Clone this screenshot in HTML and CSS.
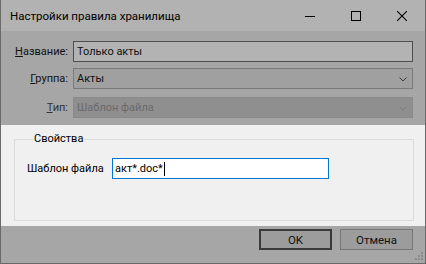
FILE: index.html
```html
<!DOCTYPE html>
<html lang="ru">
<head>
    <meta charset="UTF-8">
    <title>Настройки правила хранилища</title>
    <link rel="stylesheet" href="styles.css">
</head>
<body>

<div class="window">
    <div class="titlebar">
        <span class="title">Настройки правила хранилища</span>
        <div class="caption-btns">
            <span class="cbtn"><svg width="10" height="10" viewBox="0 0 10 10"><path d="M0 5.5H10" stroke="#000" stroke-width="1"/></svg></span>
            <span class="cbtn"><svg width="10" height="10" viewBox="0 0 10 10"><rect x="0.5" y="0.5" width="9" height="9" fill="none" stroke="#000" stroke-width="1"/></svg></span>
            <span class="cbtn"><svg width="10" height="10" viewBox="0 0 10 10"><path d="M0 0L10 10M10 0L0 10" stroke="#000" stroke-width="1.1"/></svg></span>
        </div>
    </div>

    <div class="form">
        <div class="row r1">
            <label class="lbl"><u>Н</u>азвание:</label>
            <div class="textbox">Только акты</div>
        </div>
        <div class="row r2">
            <label class="lbl"><u>Г</u>руппа:</label>
            <div class="combo">Акты
                <svg class="chev" width="8" height="5" viewBox="0 0 8 5"><path d="M0.5 0.5L4 4L7.5 0.5" fill="none" stroke="#3c3c3c"/></svg>
            </div>
        </div>
        <div class="row r3">
            <label class="lbl lbl-dis"><u>Т</u>ип:</label>
            <div class="combo disabled">Шаблон файла
                <svg class="chev" width="8" height="5" viewBox="0 0 8 5"><path d="M0.5 0.5L4 4L7.5 0.5" fill="none" stroke="#7a7a7a"/></svg>
            </div>
        </div>
    </div>

    <div class="panel">
        <fieldset class="group">
            <legend>Свойства</legend>
            <div class="prop-row">
                <span class="prop-lbl">Шаблон файла</span>
                <div class="edit">акт*.doc*<span class="caret"></span></div>
            </div>
        </fieldset>
    </div>

    <div class="footer">
        <button class="btn btn-default">OK</button>
        <button class="btn">Отмена</button>
        <svg class="grip" width="8" height="8" viewBox="0 0 8 8">
            <rect x="6" y="0" width="2" height="2" fill="#8a8a8a"/>
            <rect x="3" y="3" width="2" height="2" fill="#8a8a8a"/>
            <rect x="6" y="3" width="2" height="2" fill="#8a8a8a"/>
            <rect x="0" y="6" width="2" height="2" fill="#8a8a8a"/>
            <rect x="3" y="6" width="2" height="2" fill="#8a8a8a"/>
            <rect x="6" y="6" width="2" height="2" fill="#8a8a8a"/>
        </svg>
    </div>
</div>

</body>
</html>
```

FILE: styles.css
```css
body { margin: 0; font-family: Roboto, "Liberation Sans", sans-serif; font-size: 11px; color: #111; }

.window { width: 426px; height: 264px; box-sizing: border-box; border: 1px solid #6a6a6a; border-top: none; background: #a6a6a6; display: flex; flex-direction: column; position: relative; }

/* Заголовок */
.titlebar { height: 31px; background: #b2b2b2; display: flex; align-items: center; }
.title { padding-left: 9px; color: #000; font-size: 11.5px; }
.caption-btns { margin-left: auto; display: flex; height: 100%; }
.cbtn { width: 46px; display: flex; align-items: center; justify-content: center; }

/* Поля */
.form { padding: 10px 12px 7px 0; }
.row { display: flex; align-items: center; height: 21px; }
.r2 { margin-top: 6px; }
.r3 { margin-top: 8px; }
.lbl { width: 67px; text-align: right; margin-right: 5px; }
.lbl-dis { color: #333; }
.textbox, .combo { flex: 1; height: 21px; box-sizing: border-box; padding-left: 3px; display: flex; align-items: center; }
.textbox { background: #b3b3b3; border: 1px solid #4e4e4e; }
.combo { background: #a0a0a0; border: 1px solid #7a7a7a; position: relative; }
.combo.disabled { background: #8f8f8f; border-color: #8a8a8a; color: #6a6a6a; }
.chev { position: absolute; right: 5px; top: 8px; }

/* Свойства */
.panel { height: 101px; box-sizing: border-box; background: #f0f0f0; padding: 7px 11px 5px 13px; display: flex; flex-direction: column; }
.group { flex: 1; margin: 0; padding: 12px 12px 0 12px; border: 1px solid #dcdcdc; min-width: 0; }
.group legend { padding: 0 1px; margin-left: 6px; line-height: 14px; color: #000; }
.prop-row { display: flex; align-items: center; }
.prop-lbl { width: 85px; color: #000; }
.edit { width: 217px; height: 21px; box-sizing: border-box; border: 1px solid #0078d7; background: #fff; padding-left: 2px; display: flex; align-items: center; color: #000; }
.caret { display: inline-block; width: 1px; height: 14px; background: #000; margin-left: 1px; }

/* Кнопки */
.footer { flex: 1; display: flex; justify-content: flex-end; align-items: flex-start; gap: 8px; padding: 3px 12px 0 0; }
.btn { width: 73px; height: 21px; box-sizing: border-box; background: #9c9c9c; border: 1px solid #777; font-family: inherit; font-size: 11.5px; color: #111; padding: 0; }
.btn-default { border: 2px solid #3a3a3a; }
.grip { position: absolute; right: 2px; bottom: 3px; }
```
